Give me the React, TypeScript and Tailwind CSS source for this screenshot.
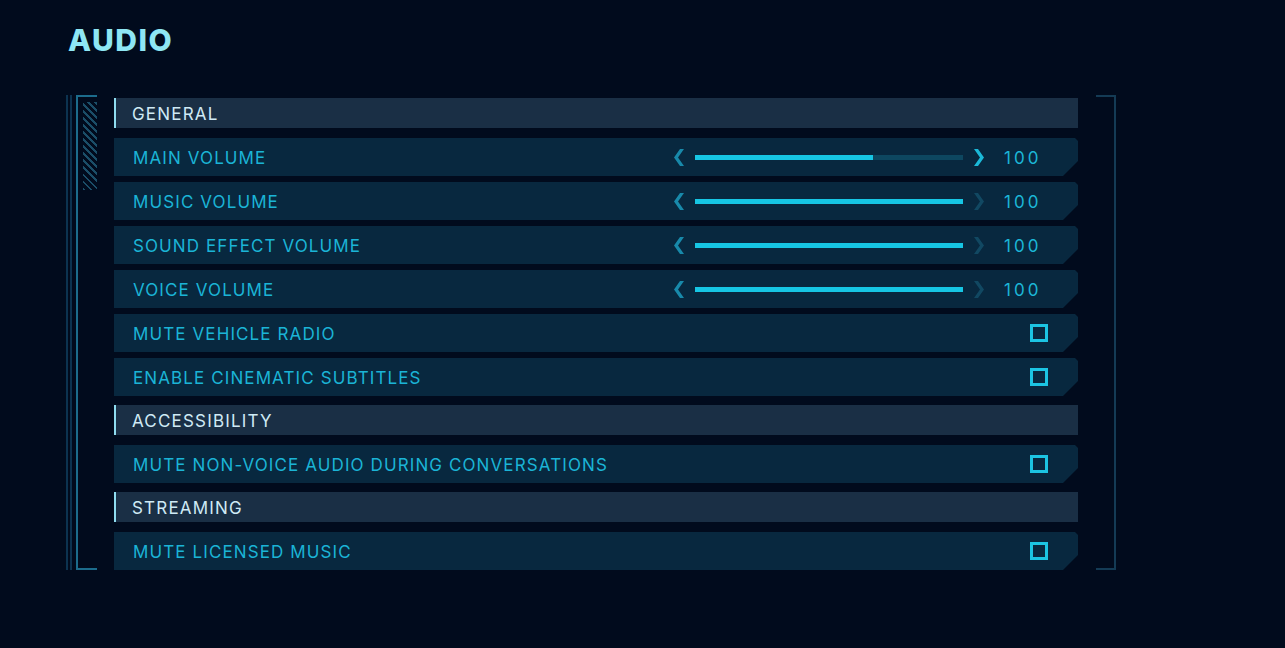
import React from 'react';

type Row =
  | { kind: 'header'; label: string }
  | { kind: 'slider'; label: string; value: number; fill: number }
  | { kind: 'check'; label: string };

const rows: Row[] = [
  { kind: 'header', label: 'GENERAL' },
  { kind: 'slider', label: 'MAIN VOLUME', value: 100, fill: 66.5 },
  { kind: 'slider', label: 'MUSIC VOLUME', value: 100, fill: 100 },
  { kind: 'slider', label: 'SOUND EFFECT VOLUME', value: 100, fill: 100 },
  { kind: 'slider', label: 'VOICE VOLUME', value: 100, fill: 100 },
  { kind: 'check', label: 'MUTE VEHICLE RADIO' },
  { kind: 'check', label: 'ENABLE CINEMATIC SUBTITLES' },
  { kind: 'header', label: 'ACCESSIBILITY' },
  { kind: 'check', label: 'MUTE NON-VOICE AUDIO DURING CONVERSATIONS' },
  { kind: 'header', label: 'STREAMING' },
  { kind: 'check', label: 'MUTE LICENSED MUSIC' },
];

const Chevron = ({ dir, color }: { dir: 'left' | 'right'; color: string }) => (
  <svg width="10" height="17" viewBox="0 0 10 17" className="shrink-0">
    <polygon
      fill={color}
      points={dir === 'left' ? '6,0 10,0 4,8.5 10,17 6,17 0,8.5' : '0,0 4,0 10,8.5 4,17 0,17 6,8.5'}
    />
  </svg>
);

const chamfer = '[clip-path:polygon(0_0,calc(100%-3px)_0,100%_3px,100%_calc(100%-15px),calc(100%-15px)_100%,0_100%)]';

function Slider({ value, fill }: { value: number; fill: number }) {
  const atMax = fill >= 100;
  return (
    <div className="flex items-center">
      <Chevron dir="left" color="#1889aa" />
      <div className="ml-[11px] h-[5px] w-[268px] bg-[#0d4760]">
        <div className="h-full bg-[#16c6e4]" style={{ width: `${fill}%` }} />
      </div>
      <div className="ml-[11px]">
        <Chevron dir="right" color={atMax ? '#114862' : '#1bb9d8'} />
      </div>
      <span className="ml-[20px] w-[38px] pt-[4px] text-[17px] tracking-[0.18em] text-[#1cb6d7]">{value}</span>
    </div>
  );
}

export default function App() {
  return (
    <div className="min-h-screen bg-[#010b1d] pl-[66px] pt-[25px] font-['Inter',sans-serif]">
      <h1 className="text-[30px] leading-[30px] font-extrabold tracking-[0.05em] text-[#8ee6f4] pl-[2px]">AUDIO</h1>

      <div className="mt-[40px] flex">
        {/* left decoration */}
        <div className="flex shrink-0">
          <div className="w-[2px] bg-[#0c3350]" />
          <div className="ml-[2px] w-[2px] bg-[#0c3350]" />
          <div className="ml-[4px] w-[21px] border-y-2 border-l-2 border-[#1c6c8c] pl-[5px] pt-[5px]">
            <div className="h-[88px] w-[14px] bg-[image:repeating-linear-gradient(45deg,#1b4e68_0px,#1b4e68_2px,transparent_2px,transparent_5px)]" />
          </div>
        </div>

        {/* settings list */}
        <div className="ml-[17px] w-[964px] pt-[3px]">
          {rows.map((row, i) => {
            const next = rows[i + 1];
            if (row.kind === 'header') {
              return (
                <div
                  key={i}
                  className="mb-[10px] flex h-[30px] items-center border-l-2 border-[#8fdcef] bg-[#1a2f45] pl-[16px] pt-[4px] text-[17px] tracking-[0.07em] text-[#cfeaf5]"
                >
                  {row.label}
                </div>
              );
            }
            return (
              <div
                key={i}
                className={`flex h-[38px] items-center bg-[#08283f] pl-[19px] ${chamfer} ${
                  next ? (next.kind === 'header' ? 'mb-[9px]' : 'mb-[6px]') : ''
                } ${row.kind === 'slider' ? 'pr-[36px]' : 'pr-[30px]'}`}
              >
                <span className="flex-1 pt-[4px] text-[17px] tracking-[0.065em] text-[#1bb4d6]">{row.label}</span>
                {row.kind === 'slider' ? (
                  <Slider value={row.value} fill={row.fill} />
                ) : (
                  <div className="h-[18px] w-[18px] border-[3px] border-[#1cc4e2]" />
                )}
              </div>
            );
          })}
        </div>

        {/* right bracket */}
        <div className="ml-[18px] w-[20px] shrink-0 border-y-2 border-r-2 border-[#143b55]" />
      </div>
    </div>
  );
}
